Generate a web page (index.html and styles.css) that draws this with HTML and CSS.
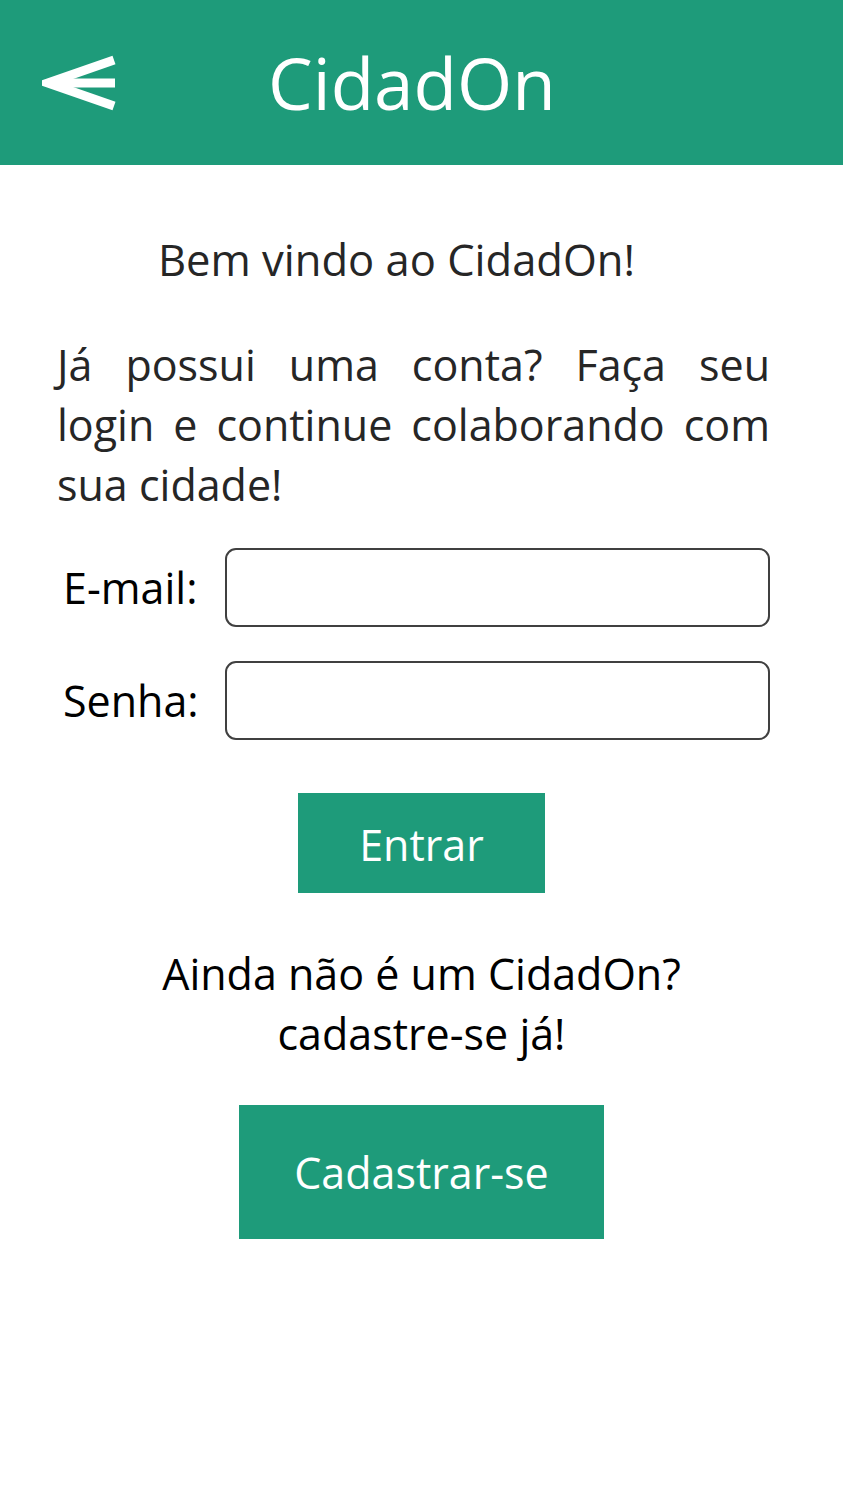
FILE: index.html
```html
<!DOCTYPE html>
<html lang="pt-BR">
<head>
<meta charset="utf-8">
<title>CidadOn</title>
<link rel="stylesheet" href="styles.css">
</head>
<body>
<header class="topbar">
  <svg class="back-icon" width="80" height="56" viewBox="0 0 80 56" aria-hidden="true">
    <polyline points="72,5 6,28 72,51" fill="none" stroke="#ffffff" stroke-width="9" stroke-linejoin="miter" stroke-miterlimit="10"/>
    <line x1="10" y1="28" x2="73" y2="28" stroke="#ffffff" stroke-width="9"/>
  </svg>
  <h1 class="title">CidadOn</h1>
</header>
<main class="content">
  <p class="welcome">Bem vindo ao CidadOn!</p>
  <p class="intro">
    <span class="jline">Já possui uma conta? Faça seu</span>
    <span class="jline">login e continue colaborando com</span>
    <span class="lastline">sua cidade!</span>
  </p>
  <form class="login-form">
    <div class="field">
      <label class="field-label" for="email">E-mail:</label>
      <input class="field-input" id="email" type="email">
    </div>
    <div class="field">
      <label class="field-label" for="senha">Senha:</label>
      <input class="field-input" id="senha" type="password">
    </div>
    <button class="btn btn-enter" type="button">Entrar</button>
  </form>
  <p class="signup-text">Ainda não é um CidadOn?<br>cadastre-se já!</p>
  <button class="btn btn-signup" type="button">Cadastrar-se</button>
</main>
</body>
</html>
```
FILE: styles.css
```css
* {
  box-sizing: border-box;
}

html, body {
  margin: 0;
  padding: 0;
  background: #ffffff;
}

body {
  font-family: "Open Sans", "Noto Sans", "Liberation Sans", sans-serif;
  color: #000000;
  width: 843px;
}

.topbar {
  height: 165px;
  background: #1e9b7a;
  display: flex;
  align-items: center;
  padding-left: 42px;
}

.back-icon {
  display: block;
  flex: none;
}

.title {
  margin: 0 0 0 146px;
  font-size: 71px;
  font-weight: 400;
  line-height: 1;
  color: #ffffff;
}

.content {
  display: flex;
  flex-direction: column;
  align-items: center;
  padding-top: 65px;
}

.welcome {
  margin: 0;
  padding-right: 50px;
  font-size: 43.5px;
  line-height: 60px;
  color: #262626;
  text-align: center;
}

.intro {
  align-self: stretch;
  margin: 45px 73px 0 57px;
  font-size: 43px;
  line-height: 60px;
  color: #262626;
}

.jline {
  display: block;
  text-align: justify;
  text-align-last: justify;
}

.lastline {
  display: block;
  text-align: left;
}

.login-form {
  align-self: stretch;
  display: flex;
  flex-direction: column;
  align-items: center;
  margin-top: 33px;
}

.field {
  align-self: stretch;
  display: grid;
  grid-template-columns: 168px 545px;
  align-items: center;
  margin: 0 73px 34px 57px;
}

.field-label {
  padding-left: 6px;
  font-size: 43px;
  line-height: 43px;
  color: #000000;
}

.field-input {
  height: 79px;
  width: 545px;
  border: 2px solid #404040;
  border-radius: 11px;
  background: #ffffff;
  font: inherit;
  font-size: 30px;
  padding: 0 16px;
  outline: none;
}

.btn {
  display: flex;
  align-items: center;
  justify-content: center;
  border: none;
  background: #1e9b7a;
  color: #ffffff;
  font-family: inherit;
  font-size: 43px;
  line-height: 1;
  padding: 0;
  cursor: pointer;
}

.btn-enter {
  width: 247px;
  height: 100px;
  margin-top: 19px;
  padding-top: 2px;
}

.signup-text {
  margin: 51px 0 0 0;
  font-size: 43px;
  line-height: 60px;
  text-align: center;
  color: #000000;
}

.btn-signup {
  width: 365px;
  height: 134px;
  margin-top: 41px;
}
```
